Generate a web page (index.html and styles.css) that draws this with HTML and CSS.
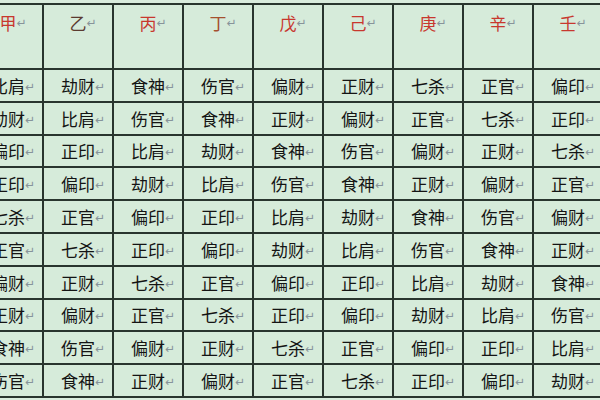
FILE: index.html
```html
<!DOCTYPE html>
<html lang="zh">
<head>
<meta charset="utf-8">
<title>十神表</title>
<link rel="stylesheet" href="styles.css">
</head>
<body>
<div class="page">
  <div class="grid">
    <div class="cell head"><span class="gan">甲</span><span class="mark">↵</span></div>
    <div class="cell head"><span class="gan dark">乙</span><span class="mark">↵</span></div>
    <div class="cell head"><span class="gan">丙</span><span class="mark">↵</span></div>
    <div class="cell head"><span class="gan brown">丁</span><span class="mark">↵</span></div>
    <div class="cell head"><span class="gan">戊</span><span class="mark">↵</span></div>
    <div class="cell head"><span class="gan">己</span><span class="mark">↵</span></div>
    <div class="cell head"><span class="gan">庚</span><span class="mark">↵</span></div>
    <div class="cell head"><span class="gan">辛</span><span class="mark">↵</span></div>
    <div class="cell head"><span class="gan">壬</span><span class="mark">↵</span></div>
    <div class="cell head"><span class="gan">癸</span><span class="mark">↵</span></div>

    <div class="cell">比肩<span class="mark">↵</span></div><div class="cell">劫财<span class="mark">↵</span></div><div class="cell">食神<span class="mark">↵</span></div><div class="cell">伤官<span class="mark">↵</span></div><div class="cell">偏财<span class="mark">↵</span></div><div class="cell">正财<span class="mark">↵</span></div><div class="cell">七杀<span class="mark">↵</span></div><div class="cell">正官<span class="mark">↵</span></div><div class="cell">偏印<span class="mark">↵</span></div><div class="cell">正印<span class="mark">↵</span></div>

    <div class="cell">劫财<span class="mark">↵</span></div><div class="cell">比肩<span class="mark">↵</span></div><div class="cell">伤官<span class="mark">↵</span></div><div class="cell">食神<span class="mark">↵</span></div><div class="cell">正财<span class="mark">↵</span></div><div class="cell">偏财<span class="mark">↵</span></div><div class="cell">正官<span class="mark">↵</span></div><div class="cell">七杀<span class="mark">↵</span></div><div class="cell">正印<span class="mark">↵</span></div><div class="cell">偏印<span class="mark">↵</span></div>

    <div class="cell">偏印<span class="mark">↵</span></div><div class="cell">正印<span class="mark">↵</span></div><div class="cell">比肩<span class="mark">↵</span></div><div class="cell">劫财<span class="mark">↵</span></div><div class="cell">食神<span class="mark">↵</span></div><div class="cell">伤官<span class="mark">↵</span></div><div class="cell">偏财<span class="mark">↵</span></div><div class="cell">正财<span class="mark">↵</span></div><div class="cell">七杀<span class="mark">↵</span></div><div class="cell">正官<span class="mark">↵</span></div>

    <div class="cell">正印<span class="mark">↵</span></div><div class="cell">偏印<span class="mark">↵</span></div><div class="cell">劫财<span class="mark">↵</span></div><div class="cell">比肩<span class="mark">↵</span></div><div class="cell">伤官<span class="mark">↵</span></div><div class="cell">食神<span class="mark">↵</span></div><div class="cell">正财<span class="mark">↵</span></div><div class="cell">偏财<span class="mark">↵</span></div><div class="cell">正官<span class="mark">↵</span></div><div class="cell">七杀<span class="mark">↵</span></div>

    <div class="cell">七杀<span class="mark">↵</span></div><div class="cell">正官<span class="mark">↵</span></div><div class="cell">偏印<span class="mark">↵</span></div><div class="cell">正印<span class="mark">↵</span></div><div class="cell">比肩<span class="mark">↵</span></div><div class="cell">劫财<span class="mark">↵</span></div><div class="cell">食神<span class="mark">↵</span></div><div class="cell">伤官<span class="mark">↵</span></div><div class="cell">偏财<span class="mark">↵</span></div><div class="cell">正财<span class="mark">↵</span></div>

    <div class="cell">正官<span class="mark">↵</span></div><div class="cell">七杀<span class="mark">↵</span></div><div class="cell">正印<span class="mark">↵</span></div><div class="cell">偏印<span class="mark">↵</span></div><div class="cell">劫财<span class="mark">↵</span></div><div class="cell">比肩<span class="mark">↵</span></div><div class="cell">伤官<span class="mark">↵</span></div><div class="cell">食神<span class="mark">↵</span></div><div class="cell">正财<span class="mark">↵</span></div><div class="cell">偏财<span class="mark">↵</span></div>

    <div class="cell">偏财<span class="mark">↵</span></div><div class="cell">正财<span class="mark">↵</span></div><div class="cell">七杀<span class="mark">↵</span></div><div class="cell">正官<span class="mark">↵</span></div><div class="cell">偏印<span class="mark">↵</span></div><div class="cell">正印<span class="mark">↵</span></div><div class="cell">比肩<span class="mark">↵</span></div><div class="cell">劫财<span class="mark">↵</span></div><div class="cell">食神<span class="mark">↵</span></div><div class="cell">伤官<span class="mark">↵</span></div>

    <div class="cell">正财<span class="mark">↵</span></div><div class="cell">偏财<span class="mark">↵</span></div><div class="cell">正官<span class="mark">↵</span></div><div class="cell">七杀<span class="mark">↵</span></div><div class="cell">正印<span class="mark">↵</span></div><div class="cell">偏印<span class="mark">↵</span></div><div class="cell">劫财<span class="mark">↵</span></div><div class="cell">比肩<span class="mark">↵</span></div><div class="cell">伤官<span class="mark">↵</span></div><div class="cell">食神<span class="mark">↵</span></div>

    <div class="cell">食神<span class="mark">↵</span></div><div class="cell">伤官<span class="mark">↵</span></div><div class="cell">偏财<span class="mark">↵</span></div><div class="cell">正财<span class="mark">↵</span></div><div class="cell">七杀<span class="mark">↵</span></div><div class="cell">正官<span class="mark">↵</span></div><div class="cell">偏印<span class="mark">↵</span></div><div class="cell">正印<span class="mark">↵</span></div><div class="cell">比肩<span class="mark">↵</span></div><div class="cell">劫财<span class="mark">↵</span></div>

    <div class="cell">伤官<span class="mark">↵</span></div><div class="cell">食神<span class="mark">↵</span></div><div class="cell">正财<span class="mark">↵</span></div><div class="cell">偏财<span class="mark">↵</span></div><div class="cell">正官<span class="mark">↵</span></div><div class="cell">七杀<span class="mark">↵</span></div><div class="cell">正印<span class="mark">↵</span></div><div class="cell">偏印<span class="mark">↵</span></div><div class="cell">劫财<span class="mark">↵</span></div><div class="cell">比肩<span class="mark">↵</span></div>
  </div>
</div>
</body>
</html>
```
FILE: styles.css
```css
html, body {
  margin: 0;
  padding: 0;
  width: 600px;
  height: 400px;
  overflow: hidden;
  background: #d9ecdd;
}

.page {
  width: 600px;
  height: 400px;
  overflow: hidden;
  padding-top: 3px;
  box-sizing: border-box;
}

.grid {
  display: grid;
  grid-template-columns: repeat(10, 68px);
  grid-template-rows: 63px repeat(10, 30.8px);
  gap: 2px;
  padding: 2px;
  width: max-content;
  margin-left: -28px;
  background: #29352e;
  font-family: "Noto Sans CJK SC", "Noto Sans", sans-serif;
  font-size: 17px;
  color: #141414;
}

.cell {
  background: #d6ebda;
  display: flex;
  align-items: center;
  justify-content: center;
  line-height: 1;
  white-space: nowrap;
}

.head {
  align-items: flex-start;
  padding-top: 9px;
  box-sizing: border-box;
}

.gan {
  color: #c8372e;
}

.gan.dark {
  color: #5b3a30;
}

.gan.brown {
  color: #a5502f;
}

.mark {
  display: inline-block;
  width: 0;
  overflow: visible;
  font-family: "DejaVu Sans", sans-serif;
  font-size: 12px;
  color: #87939a;
  padding-top: 3px;
}
```
